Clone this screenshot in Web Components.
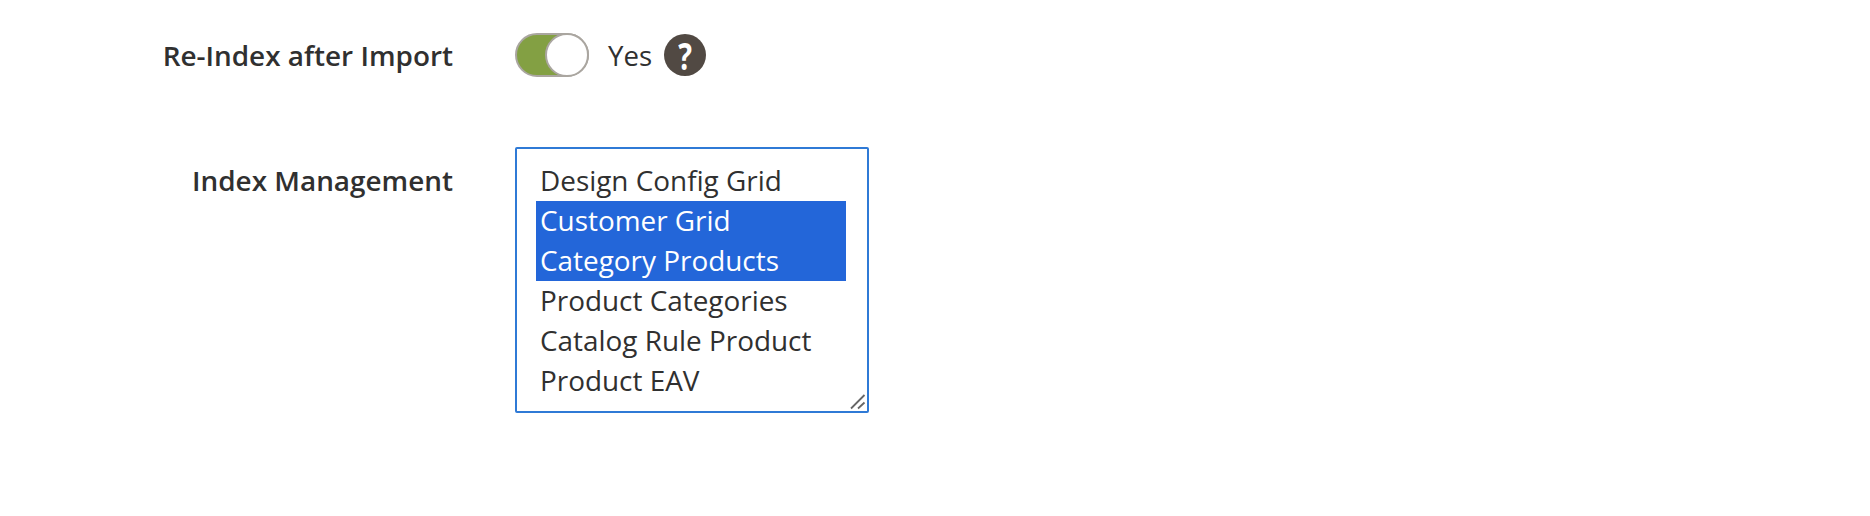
<!DOCTYPE html>
<html lang="en">
<head>
<meta charset="utf-8">
<title>Import settings</title>
<style>
  html, body { margin: 0; background: #fff; }
  body {
    width: 1870px;
    height: 516px;
    overflow: hidden;
    font-family: "Open Sans", sans-serif;
    color: #303030;
  }
  main { display: flex; flex-direction: column; gap: 65px; padding-top: 28px; }
</style>
</head>
<body>
<main>
  <config-row label="Re-Index after Import">
    <toggle-switch checked>Yes</toggle-switch>
    <help-icon></help-icon>
  </config-row>
  <config-row label="Index Management" style="--label-top: 6px">
    <index-list>
      <index-option>Design Config Grid</index-option>
      <index-option selected>Customer Grid</index-option>
      <index-option selected>Category Products</index-option>
      <index-option>Product Categories</index-option>
      <index-option>Catalog Rule Product</index-option>
      <index-option>Product EAV</index-option>
    </index-list>
  </config-row>
</main>

<script>
class ConfigRow extends HTMLElement {
  connectedCallback() {
    const shadowDOM = this.attachShadow({ mode: "open" });
    shadowDOM.innerHTML = `
    <style>
      :host {
        display: grid;
        grid-template-columns: 453px auto;
        column-gap: 62px;
        align-items: start;
      }
      .label {
        padding-top: var(--label-top, 0);
        text-align: right;
        font-size: 27.9px;
        font-weight: 600;
        line-height: 54px;
      }
      .control { display: flex; align-items: center; }
    </style>
    <div class="label">${this.getAttribute("label")}</div>
    <div class="control"><slot></slot></div>
    `;
  }
}

class ToggleSwitch extends HTMLElement {
  connectedCallback() {
    const shadowDOM = this.attachShadow({ mode: "open" });
    shadowDOM.innerHTML = `
    <style>
      :host {
        display: inline-flex;
        align-items: center;
        gap: 19px;
        font-size: 27.6px;
        line-height: 54px;
      }
      .track {
        box-sizing: border-box;
        width: 74px;
        height: 44px;
        border: 2px solid #aaa6a0;
        border-radius: 22px;
        background: #fff;
        display: flex;
        justify-content: flex-end;
      }
      :host([checked]) .track { background: #83a043; }
      .knob {
        box-sizing: border-box;
        flex: none;
        width: 44px;
        height: 44px;
        margin: -2px;
        border-radius: 50%;
        background: #fff;
        border: 2px solid #aaa6a0;
      }
    </style>
    <span class="track"><span class="knob"></span></span>
    <span><slot></slot></span>
    `;
  }
}

class HelpIcon extends HTMLElement {
  connectedCallback() {
    const shadowDOM = this.attachShadow({ mode: "open" });
    shadowDOM.innerHTML = `
    <style>
      :host {
        display: inline-flex;
        align-items: center;
        justify-content: center;
        width: 42px;
        height: 42px;
        margin-left: 12px;
        border-radius: 50%;
        background: #514943;
        color: #fff;
        font-size: 38px;
        font-weight: 700;
        line-height: 1;
      }
      span { display: block; transform: scaleX(0.76); }
    </style>
    <span>?</span>
    `;
  }
}

class IndexList extends HTMLElement {
  connectedCallback() {
    const shadowDOM = this.attachShadow({ mode: "open" });
    shadowDOM.innerHTML = `
    <style>
      :host {
        display: flex;
        flex-direction: column;
        box-sizing: border-box;
        position: relative;
        width: 354px;
        height: 266px;
        padding: 12px 21px 10px 19px;
        border: 2px solid #2f7ad6;
        border-radius: 2px;
        background: #fff;
      }
      svg { position: absolute; right: 1px; bottom: 1px; }
    </style>
    <slot></slot>
    <svg width="16" height="16" viewBox="0 0 16 16" fill="none" stroke="#666" stroke-width="1.8">
      <path d="M1 14.5 14.5 1M8 14.5 14.5 8.5"/>
    </svg>
    `;
  }
}

class IndexOption extends HTMLElement {
  connectedCallback() {
    const shadowDOM = this.attachShadow({ mode: "open" });
    shadowDOM.innerHTML = `
    <style>
      :host {
        display: block;
        height: 40px;
        padding-left: 4px;
        font-size: 27.9px;
        line-height: 38px;
        white-space: nowrap;
      }
      :host([selected]) { background: #2366d9; color: #fff; }
    </style>
    <slot></slot>
    `;
  }
}

customElements.define("config-row", ConfigRow);
customElements.define("toggle-switch", ToggleSwitch);
customElements.define("help-icon", HelpIcon);
customElements.define("index-list", IndexList);
customElements.define("index-option", IndexOption);
</script>
</body>
</html>
